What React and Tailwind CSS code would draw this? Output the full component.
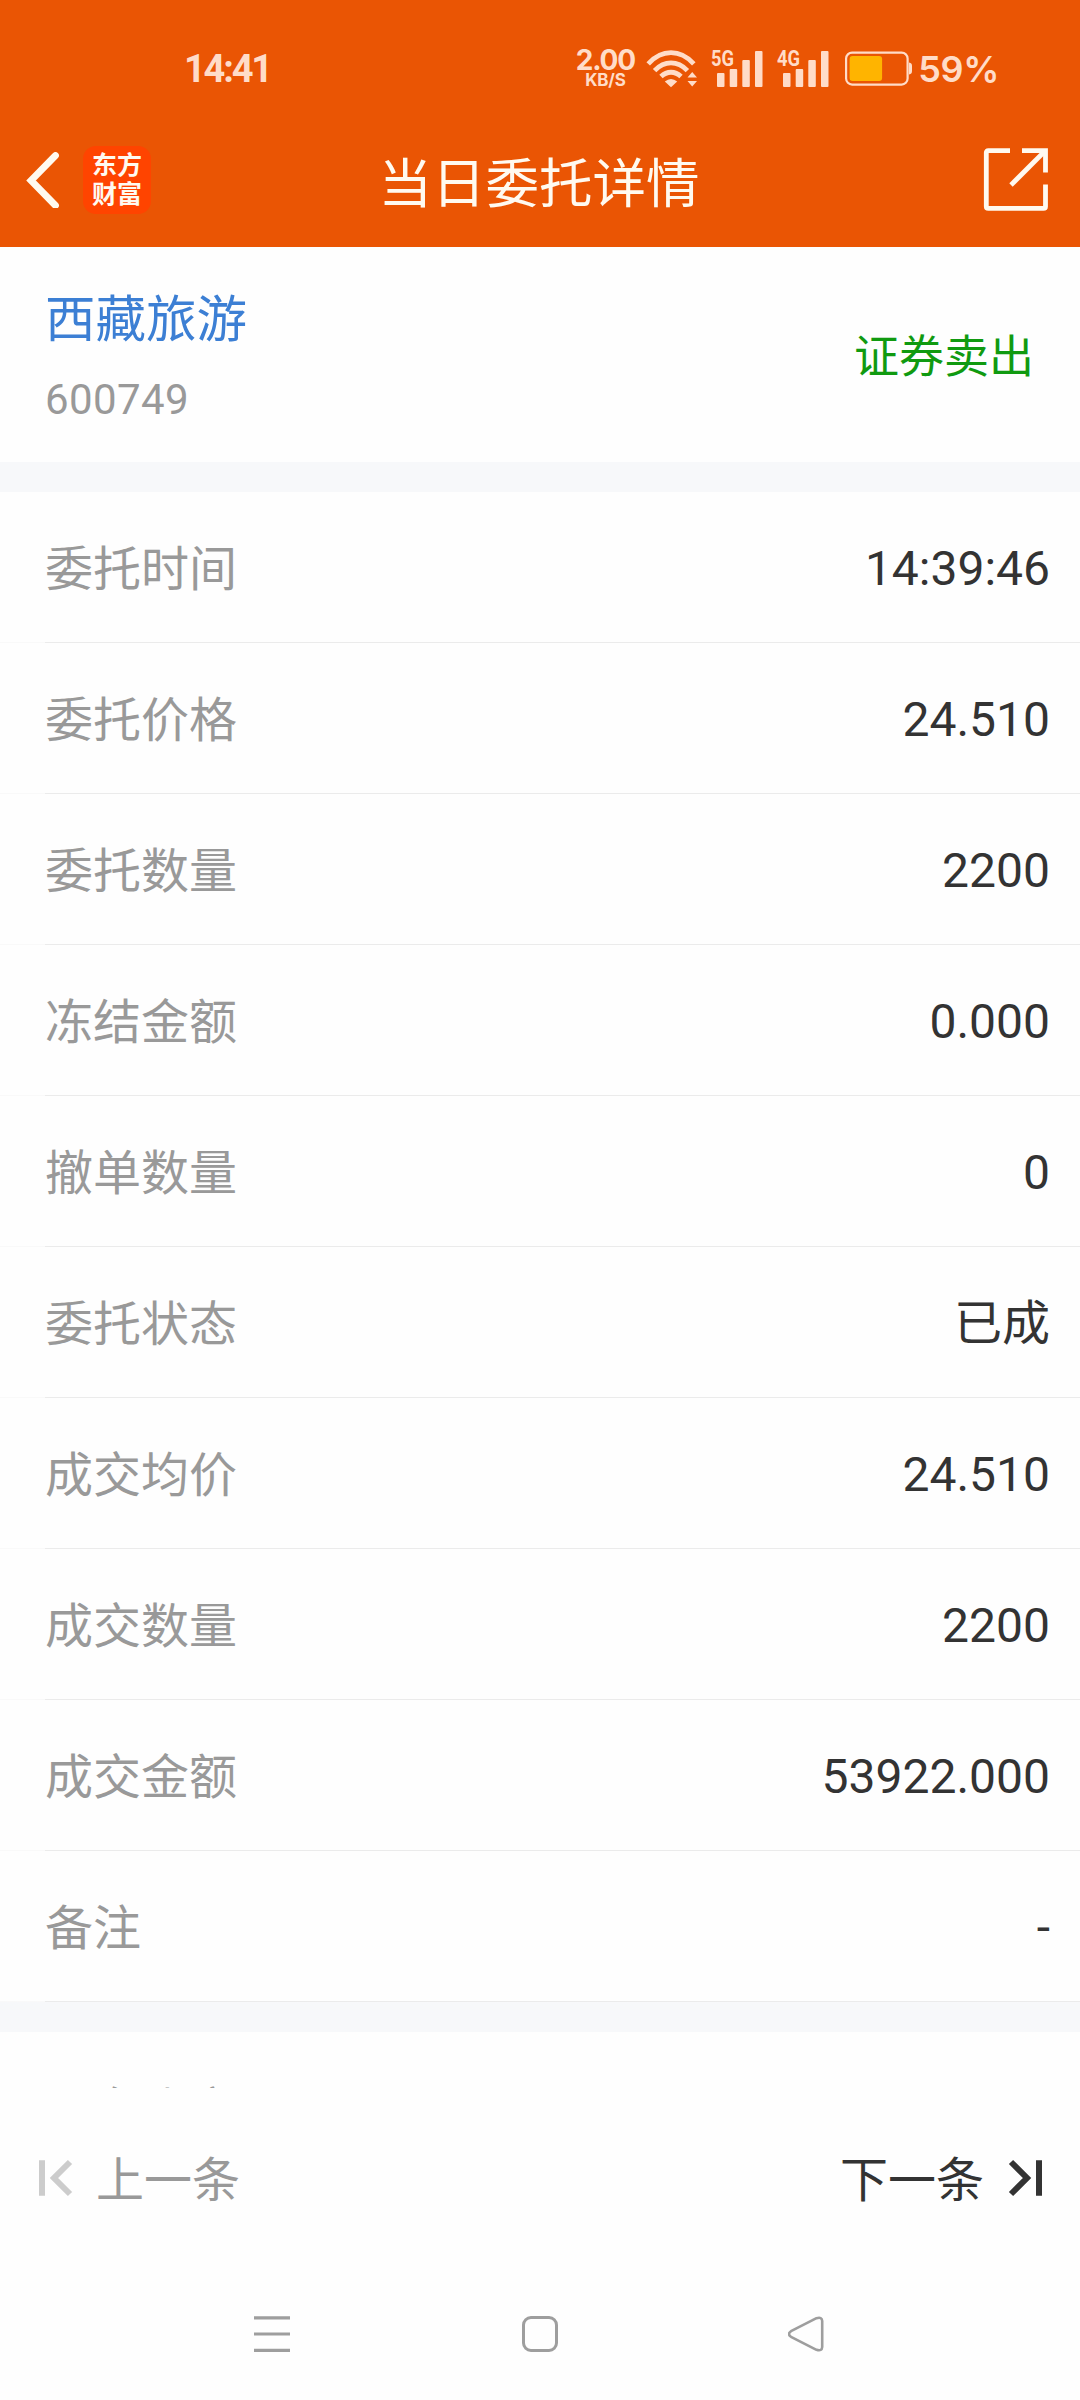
import React from "react";

const rows = [
  { label: "委托时间", value: "14:39:46" },
  { label: "委托价格", value: "24.510" },
  { label: "委托数量", value: "2200" },
  { label: "冻结金额", value: "0.000" },
  { label: "撤单数量", value: "0" },
  { label: "委托状态", value: "已成" },
  { label: "成交均价", value: "24.510" },
  { label: "成交数量", value: "2200" },
  { label: "成交金额", value: "53922.000" },
  { label: "备注", value: "-" },
];

const WifiIcon = () => (
  <svg width="52" height="38" viewBox="0 0 52 38" fill="none" stroke="#ffdcc8" strokeWidth="4.8">
    <path d="M2.2 13.8C16 -1 34 -1 47.8 13.8" />
    <path d="M8.6 20.6C18.5 10.4 31.5 10.4 41.4 20.6" />
    <path d="M15 26.6C21 20.8 29 20.8 35 26.6" />
    <path d="M25 37.2L18.8 31.4Q25 26.4 31.2 31.4Z" fill="#ffdcc8" stroke="none" />
    <path d="M41.5 27.5L46.2 22L51 27.5ZM41.5 31L46.2 36.5L51 31Z" fill="#ffdcc8" stroke="none" />
  </svg>
);

const SignalIcon = ({ label }) => (
  <svg className="overflow-visible" width="52" height="38" viewBox="0 0 52 38" fill="#ffdcc8">
    <text x="0" y="16" fontFamily="Roboto, sans-serif" fontWeight="700" fontSize="22" textLength="23" lengthAdjust="spacingAndGlyphs">
      {label}
    </text>
    <rect x="6" y="23" width="7.5" height="14" rx="1" />
    <rect x="18.7" y="19" width="7.5" height="18" rx="1" />
    <rect x="31.3" y="10" width="7.5" height="27" rx="1" />
    <rect x="44" y="1" width="7.5" height="36" rx="1" />
  </svg>
);

const BatteryIcon = () => (
  <svg width="68" height="36" viewBox="0 0 68 36" fill="none">
    <rect x="1.1" y="1.6" width="61.5" height="32" rx="6" stroke="#ffdcc8" strokeWidth="2.2" />
    <path d="M64 11.5C66.5 12 67 13 67 15V20C67 22 66.5 23 64 23.5Z" fill="#ffdcc8" />
    <rect x="4.6" y="5" width="32.5" height="25" rx="3" fill="#ffb400" />
  </svg>
);

const StatusBar = () => (
  <div className="flex h-[114px] items-center justify-between pt-[23px] pr-[81px] pl-[184px] text-[#ffdcc8]">
    <span className="font-[Roboto,sans-serif] text-[38px] leading-none font-bold tracking-[-2.2px]">14:41</span>
    <div className="flex items-center font-[Inter,sans-serif]">
      <div className="mr-[12px] flex w-[58px] flex-col items-center font-bold">
        <span className="text-[28px] leading-[23px] tracking-[-1.2px]">2.00</span>
        <span className="text-[17px] leading-[17px] tracking-[-0.2px]">KB/S</span>
      </div>
      <WifiIcon />
      <div className="ml-[13px]"><SignalIcon label="5G" /></div>
      <div className="ml-[14px]"><SignalIcon label="4G" /></div>
      <div className="ml-[16px]"><BatteryIcon /></div>
      <span className="ml-[5px] pt-px text-[36px] leading-none font-semibold tracking-[-0.4px]">59%</span>
    </div>
  </div>
);

const NavHeader = () => (
  <div className="flex h-[133px] items-start justify-between pr-[32px] pl-[26px] text-[#fffaf0]">
    <div className="flex w-[152px] items-center pt-[32px]">
      <svg width="34" height="56" viewBox="0 0 34 56" fill="none" stroke="currentColor" strokeWidth="6.8" strokeLinecap="round">
        <path d="M29.5 3.5L5 28.5L29.5 53.5" />
      </svg>
      <div className="ml-[23px] flex size-[68px] flex-col items-center justify-center rounded-[13px] bg-[#ff4400] text-[25px] leading-[29px] font-bold">
        <span>东方</span>
        <span>财富</span>
      </div>
    </div>
    <h1 className="pt-[31px] text-[53.5px] leading-[80px]">当日委托详情</h1>
    <div className="flex w-[148px] justify-end pt-[33px]">
      <svg width="65" height="65" viewBox="0 0 65 65" fill="none" stroke="currentColor" strokeWidth="4.8">
        <path d="M27 3.6H5.3Q3.3 3.6 3.3 5.6V59.4Q3.3 61.4 5.3 61.4H60.5Q62.5 61.4 62.5 59.4V37.5" />
        <path d="M39 3.6H62.5V25.5" />
        <path d="M28 38L61.5 4.5" />
      </svg>
    </div>
  </div>
);

const Divider = () => (
  <div className="flex h-px w-full">
    <div className="w-[45px] bg-[#f9f9f9]" />
    <div className="flex-1 bg-[#ebebeb]" />
  </div>
);

const DetailRow = ({ label, value }) => (
  <div className="flex h-[151px] flex-col">
    <div className="flex flex-1 items-center justify-between pt-[6px] pr-[30px] pl-[45px] text-[48px] leading-none">
      <span className="text-[#999]">{label}</span>
      <span className="pb-[2px] text-[#333]">{value}</span>
    </div>
    <Divider />
  </div>
);

const App = () => {
  return (
    <div className="flex h-[2400px] w-[1080px] flex-col overflow-hidden bg-[#fefefe] font-[Roboto,'Noto_Sans_CJK_SC',sans-serif]">
      <header className="h-[247px] shrink-0 bg-[#ea5504]">
        <StatusBar />
        <NavHeader />
      </header>

      <main className="h-[1841px] shrink-0 overflow-hidden">
        <section className="flex h-[215px] items-center justify-between pt-[2px] pr-[46px] pl-[45px]">
          <div className="flex flex-col">
            <span className="text-[50.5px] leading-[76px] text-[#3c7fd4]">西藏旅游</span>
            <span className="mt-[12px] text-[42px] leading-[60px] tracking-[0.4px] text-[#999]">600749</span>
          </div>
          <span className="pt-[4px] text-[45px] leading-none text-[#109a10]">证券卖出</span>
        </section>
        <div className="h-[30px] bg-[#f7f8fa]" />
        {rows.map((row) => (
          <DetailRow key={row.label} {...row} />
        ))}
        <div className="h-[30px] bg-[#f7f8fa]" />
        {/* next group, only its top edge shows above the footer */}
        <div className="pt-px">
          <DetailRow label="股东账户" value="" />
        </div>
      </main>

      <footer className="flex h-[180px] shrink-0 items-center justify-between pr-[37px] pl-[38px] text-[48px] leading-none">
        <button className="flex items-center text-[#999]">
          <svg width="36" height="38" viewBox="0 0 36 38" fill="none" stroke="#ccc" strokeWidth="6">
            <path d="M4 1.3V36.7M32 3L16 19L32 35" />
          </svg>
          <span className="ml-[22px] pt-[5px]">上一条</span>
        </button>
        <button className="flex items-center text-[#333]">
          <span className="mr-[23px] pt-[5px]">下一条</span>
          <svg width="36" height="38" viewBox="0 0 36 38" fill="none" stroke="#333" strokeWidth="6">
            <path d="M32 1.3V36.7M4 3L20 19L4 35" />
          </svg>
        </button>
      </footer>

      <nav className="flex flex-1 items-center justify-between pr-[254px] pl-[253px]">
        <svg width="38" height="38" viewBox="0 0 38 38" stroke="#9e9e9e" strokeWidth="3.2">
          <path d="M1 2.8H37M1 19H37M1 35.4H37" />
        </svg>
        <svg width="38" height="38" viewBox="0 0 38 38" fill="none" stroke="#9e9e9e" strokeWidth="3">
          <rect x="2.5" y="2.5" width="33" height="33" rx="7.5" />
        </svg>
        <svg width="38" height="38" viewBox="0 0 38 38" fill="none" stroke="#9e9e9e" strokeWidth="2.6" strokeLinejoin="round">
          <path d="M3 16.2L28.5 3.2Q34 1.5 34.2 6V32Q34 36.5 28.5 34.8L3 21.8Q-1 19 3 16.2Z" />
        </svg>
      </nav>
    </div>
  );
};

export default App;
